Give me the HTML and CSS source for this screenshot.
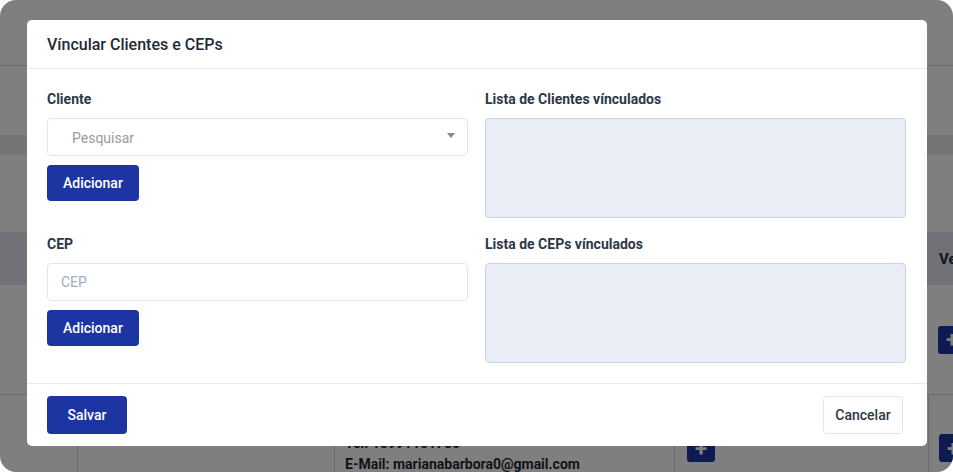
FILE: index.html
```html
<!DOCTYPE html>
<html lang="pt-BR">
<head>
    <meta charset="UTF-8">
    <meta name="viewport" content="width=device-width, initial-scale=1.0">
    <title>Vincular Clientes e CEPs</title>
    <link rel="stylesheet" href="styles.css">
</head>
<body>
    <div class="screen">
        <!-- Page behind the modal -->
        <div class="page">
            <div class="topbar"></div>
            <div class="toolbar"></div>
            <div class="band"></div>
            <div class="filters"></div>
            <div class="table">
                <div class="thead">
                    <div class="th"></div>
                    <div class="th"></div>
                    <div class="th"></div>
                    <div class="th"></div>
                    <div class="th">Vendedor</div>
                </div>
                <div class="tr">
                    <div class="td"></div>
                    <div class="td"></div>
                    <div class="td"></div>
                    <div class="td"></div>
                    <div class="td"><span class="add-btn">+</span></div>
                </div>
                <div class="tr tr-second">
                    <div class="td"></div>
                    <div class="td"></div>
                    <div class="td info">
                        <div>Tel: 15991151780</div>
                        <div>E-Mail: marianabarbora0@gmail.com</div>
                    </div>
                    <div class="td"><span class="add-btn">+</span></div>
                    <div class="td"><span class="add-btn">+</span></div>
                </div>
            </div>
        </div>

        <div class="overlay">
            <div class="modal">
                <div class="modal-header">Víncular Clientes e CEPs</div>
                <div class="modal-body">
                    <div class="field">
                        <label>Cliente</label>
                        <div class="select">
                            <span class="select-placeholder">Pesquisar</span>
                            <span class="select-arrow"></span>
                        </div>
                        <button class="btn btn-primary">Adicionar</button>
                    </div>
                    <div class="field">
                        <label>Lista de Clientes vínculados</label>
                        <div class="list-box"></div>
                    </div>
                    <div class="field">
                        <label>CEP</label>
                        <input type="text" class="input" placeholder="CEP">
                        <button class="btn btn-primary">Adicionar</button>
                    </div>
                    <div class="field">
                        <label>Lista de CEPs vínculados</label>
                        <div class="list-box"></div>
                    </div>
                </div>
                <div class="modal-footer">
                    <button class="btn btn-primary btn-save">Salvar</button>
                    <button class="btn btn-outline">Cancelar</button>
                </div>
            </div>
        </div>
    </div>
</body>
</html>
```

FILE: styles.css
```css
* {
    margin: 0;
    padding: 0;
    box-sizing: border-box;
    font-family: Roboto, "Liberation Sans", Arial, sans-serif;
}
body {
    background: #ffffff;
    width: 953px;
    height: 472px;
    overflow: hidden;
}
.screen {
    position: relative;
    width: 953px;
    height: 472px;
    border-radius: 16px;
    overflow: hidden;
    background: #ffffff;
}

/* Page behind */
.topbar {
    height: 66px;
    border-bottom: 1px solid #dcdcdc;
}
.toolbar {
    height: 69px;
}
.band {
    height: 20px;
    background: #ebebeb;
}
.filters {
    height: 77px;
}
.thead,
.tr {
    display: grid;
    grid-template-columns: 77px 257px 340px 254px 1fr;
}
.thead {
    height: 53px;
    background: #e0e5ee;
    align-items: center;
}
.th {
    padding: 0 12px;
    font-weight: 700;
    font-size: 15px;
    color: #1f2937;
    white-space: nowrap;
}
.th:last-child {
    padding-left: 11px;
}
.tr {
    height: 110px;
    border-bottom: 1px solid #d6d6d6;
    align-items: center;
}
.tr-second {
    border-bottom: none;
    align-items: stretch;
}
.tr-second .td {
    border-left: 1px solid #d6d6d6;
    display: flex;
    align-items: flex-start;
    padding-top: 39px;
}
.tr-second .td:first-child {
    border-left: none;
}
.td {
    padding: 0 12px;
    font-size: 15px;
    color: #1f2937;
}
.td:last-child {
    padding-left: 10px;
}
.tr-second .td.info {
    flex-direction: column;
    gap: 5px;
    padding: 40px 10px 0;
    font-size: 14px;
    font-weight: 700;
    white-space: nowrap;
}
.add-btn {
    display: inline-flex;
    align-items: center;
    justify-content: center;
    width: 28px;
    height: 28px;
    background: #1c35a3;
    color: #fff;
    border-radius: 3px;
    font-size: 22px;
    font-weight: 700;
}

/* Modal */
.overlay {
    position: absolute;
    inset: 0;
    background: rgba(0, 0, 0, 0.5);
}
.modal {
    position: absolute;
    top: 20px;
    left: 27px;
    width: 900px;
    background: #ffffff;
    border-radius: 5px;
}
.modal-header {
    height: 49px;
    padding: 0 20px;
    display: flex;
    align-items: center;
    font-size: 16px;
    font-weight: 500;
    color: #1f2937;
    border-bottom: 1px solid #e6ebf2;
}
.modal-body {
    display: grid;
    grid-template-columns: 1fr 1fr;
    column-gap: 17px;
    row-gap: 16px;
    padding: 20px 21px 20px 20px;
}
.field {
    display: flex;
    flex-direction: column;
    align-items: flex-start;
}
.field label {
    font-size: 14px;
    font-weight: 700;
    color: #2d3748;
    line-height: 20px;
    margin-bottom: 9px;
}
.select {
    width: 100%;
    height: 38px;
    border: 1px solid #dfe5ee;
    border-radius: 4px;
    display: flex;
    align-items: center;
    justify-content: space-between;
    padding: 1px 12px 0 24px;
    margin-bottom: 9px;
}
.select-placeholder {
    font-size: 14px;
    color: #9a9a9a;
}
.select-arrow {
    width: 0;
    height: 0;
    border-left: 4px solid transparent;
    border-right: 4px solid transparent;
    border-top: 5px solid #888888;
    margin-top: -4px;
}
.input {
    width: 100%;
    height: 38px;
    border: 1px solid #dfe5ee;
    border-radius: 4px;
    padding: 0 13px;
    font-size: 14px;
    color: #2d3748;
    margin-bottom: 9px;
    outline: none;
}
.input::placeholder {
    color: #a0aec0;
}
.list-box {
    width: 100%;
    height: 100px;
    background: #e9eef6;
    border: 1px solid #c9d4e4;
    border-radius: 4px;
}
.btn {
    font-size: 14px;
    font-weight: 500;
    border-radius: 4px;
    cursor: pointer;
}
.btn-primary {
    height: 36px;
    padding: 0 16px;
    background: #1c35a3;
    color: #ffffff;
    border: none;
}
.modal-footer {
    display: flex;
    justify-content: space-between;
    align-items: center;
    padding: 12px 24px 12px 20px;
    border-top: 1px solid #e6ebf2;
}
.btn-save {
    height: 38px;
    width: 80px;
}
.btn-outline {
    height: 38px;
    width: 80px;
    background: #ffffff;
    border: 1px solid #dfe5ee;
    color: #2d3748;
}
```
